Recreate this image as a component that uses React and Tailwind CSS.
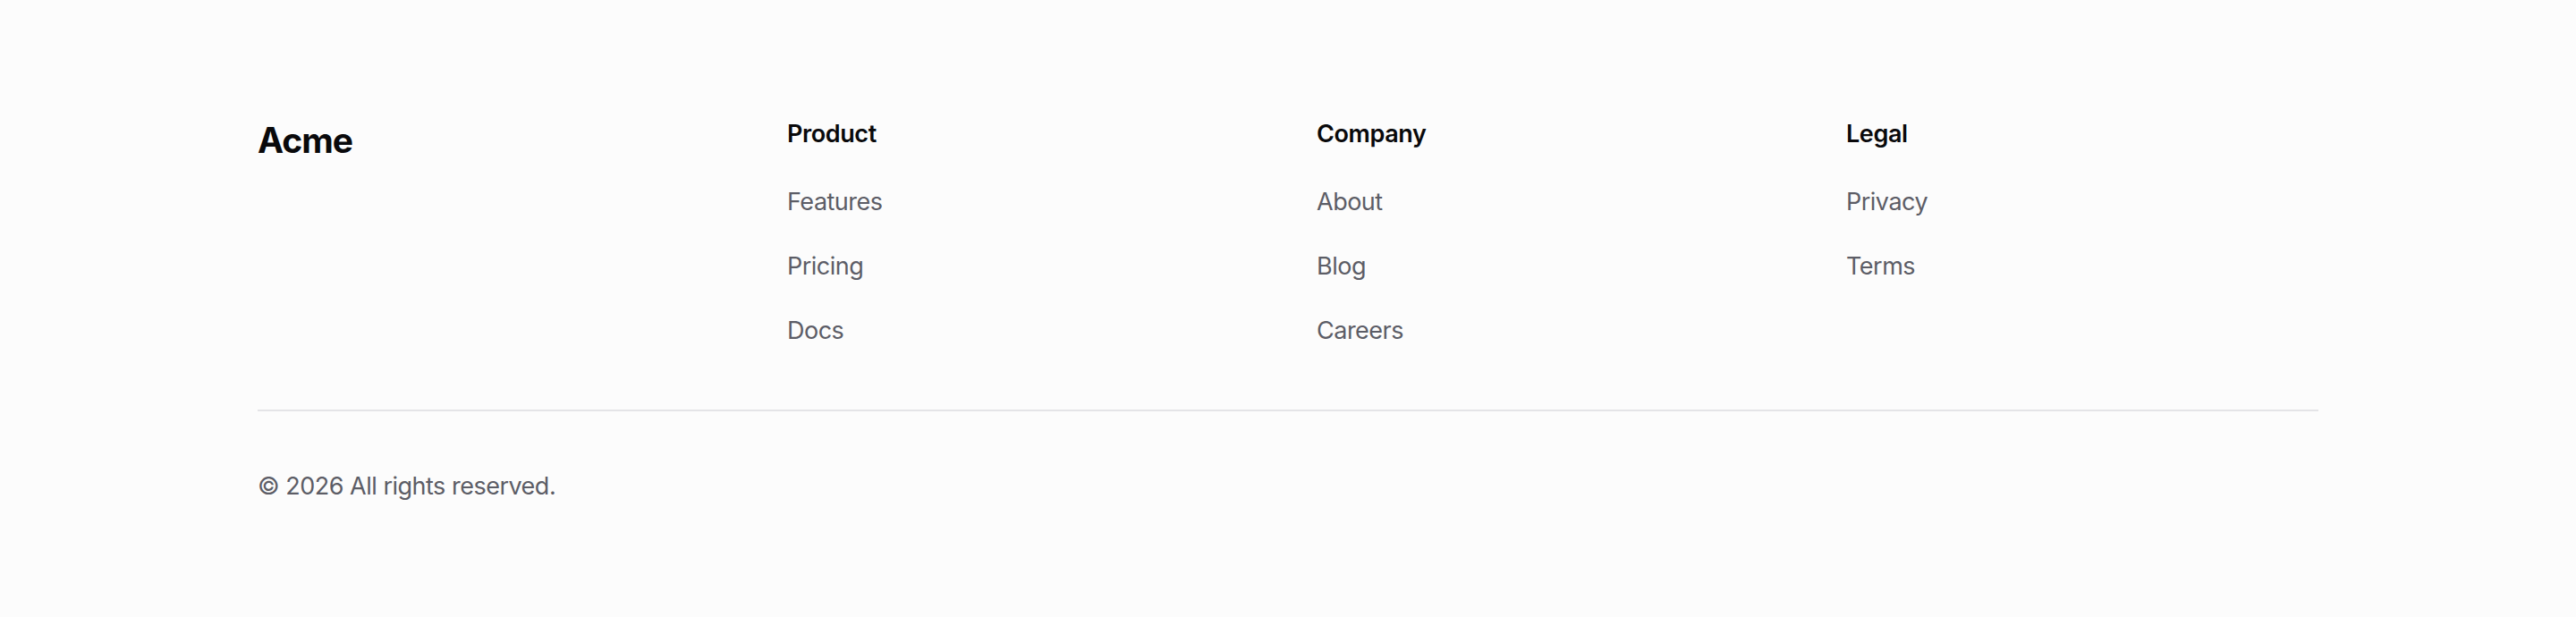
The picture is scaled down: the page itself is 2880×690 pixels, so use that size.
const columns = [
  { title: "Product", links: ["Features", "Pricing", "Docs"] },
  { title: "Company", links: ["About", "Blog", "Careers"] },
  { title: "Legal", links: ["Privacy", "Terms"] },
];

export default function App() {
  return (
    <footer
      className="min-h-[690px] bg-[#fcfcfc] px-[288px] pt-[130px]"
      style={{ fontFamily: "Inter, 'Noto Sans', sans-serif" }}
    >
      <div className="grid grid-cols-4 gap-x-16">
        <div className="text-[39px] font-bold leading-[54px] tracking-[-1px] text-[#09090b]">
          Acme
        </div>
        {columns.map((col) => (
          <div key={col.title}>
            <h3 className="text-[27px] font-semibold leading-[40px] tracking-[-0.4px] text-[#09090b]">
              {col.title}
            </h3>
            <ul className="mt-[34px] flex flex-col gap-[29px]">
              {col.links.map((link) => (
                <li key={link}>
                  <a
                    href="#"
                    className="text-[27px] leading-[43px] tracking-[-0.5px] text-[#5c5d66]"
                  >
                    {link}
                  </a>
                </li>
              ))}
            </ul>
          </div>
        ))}
      </div>
      <div className="mt-[67px] h-[2px] bg-[#e4e4e7]" />
      <p className="mt-[62px] text-[27px] leading-[43px] tracking-[-0.5px] text-[#5c5d66]">
        © 2026 All rights reserved.
      </p>
    </footer>
  );
}
